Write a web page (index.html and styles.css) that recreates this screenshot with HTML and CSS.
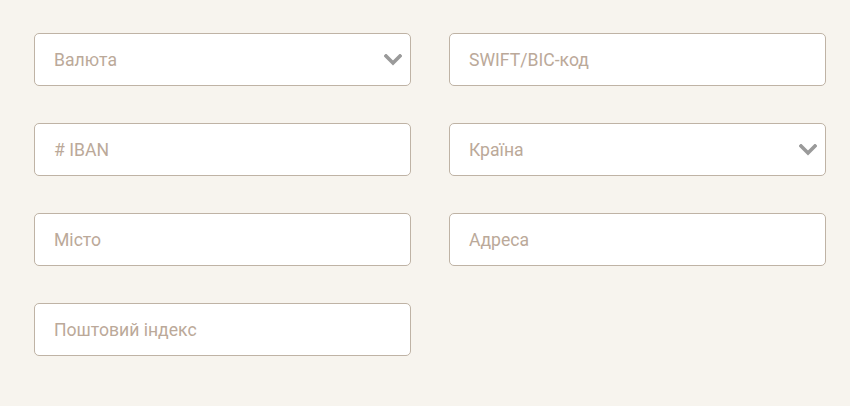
FILE: index.html
```html
<!DOCTYPE html>
<html lang="uk">
<head>
<meta charset="utf-8">
<link rel="stylesheet" href="styles.css">
</head>
<body>
<form class="form">
  <div class="field select">
    <span class="ph">Валюта</span>
    <svg class="chev" viewBox="0 0 18 12" width="18" height="12"><path d="M2 2 L9 9 L16 2" fill="none" stroke="#9a9a9a" stroke-width="3.6" stroke-linecap="square"/></svg>
  </div>
  <div class="field"><span class="ph">SWIFT/BIC-код</span></div>
  <div class="field"><span class="ph"># IBAN</span></div>
  <div class="field select">
    <span class="ph">Країна</span>
    <svg class="chev" viewBox="0 0 18 12" width="18" height="12"><path d="M2 2 L9 9 L16 2" fill="none" stroke="#9a9a9a" stroke-width="3.6" stroke-linecap="square"/></svg>
  </div>
  <div class="field"><span class="ph">Місто</span></div>
  <div class="field"><span class="ph">Адреса</span></div>
  <div class="field"><span class="ph">Поштовий індекс</span></div>
</form>
</body>
</html>
```
FILE: styles.css
```css
html, body {
  margin: 0;
  padding: 0;
  background: #f7f4ee;
}
body {
  font-family: Roboto, "Liberation Sans", sans-serif;
  width: 850px;
  height: 406px;
  overflow: hidden;
}
.form {
  display: grid;
  grid-template-columns: 377px 377px;
  column-gap: 38px;
  row-gap: 37px;
  padding: 33px 0 0 34px;
}
.field {
  box-sizing: border-box;
  height: 53px;
  background: #fff;
  border: 1px solid #bfb3a5;
  border-radius: 5px;
  display: flex;
  align-items: center;
  justify-content: space-between;
  padding: 0 8px 0 19px;
}
.ph {
  font-size: 17.6px;
  color: #bba999;
}
.chev {
  display: block;
  margin-top: 1px;
}
```
